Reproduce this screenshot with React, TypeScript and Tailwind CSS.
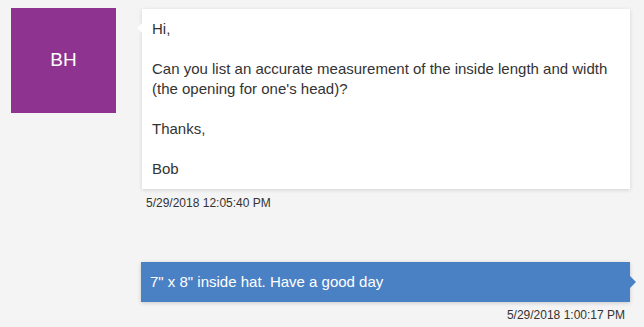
export default function App() {
  return (
    <div
      className="h-[327px] w-[644px] overflow-hidden bg-[#f4f4f4] pt-[8px] text-[#333]"
      style={{ fontFamily: '"Liberation Sans", Arial, sans-serif' }}
    >
      {/* incoming message */}
      <div className="flex items-start">
        <div className="ml-[11px] flex h-[105px] w-[105px] shrink-0 items-center justify-center bg-[#8e3390] text-[19px] text-white">
          BH
        </div>
        <div className="ml-[26px] mt-[1px] w-[488px]">
          <div className="relative bg-white px-[10px] py-[10px] text-[15px] leading-[20px] shadow-[0_1px_4px_rgba(0,0,0,0.14)]">
            <span className="absolute left-[-5px] top-[14px] h-0 w-0 border-y-[5px] border-r-[5px] border-y-transparent border-r-white" />
            <p>Hi,</p>
            <p className="mt-[20px]">
              Can you list an accurate measurement of the inside length and width (the opening for one's head)?
            </p>
            <p className="mt-[20px]">Thanks,</p>
            <p className="mt-[20px]">Bob</p>
          </div>
          <div className="mt-[6px] pl-[4px] text-[12px] leading-[16px]">5/29/2018 12:05:40 PM</div>
        </div>
      </div>

      {/* outgoing message */}
      <div className="ml-[141px] mt-[51px] w-[489px]">
        <div className="relative bg-[#4a81c4] px-[9px] py-[10px] text-[15px] leading-[20px] text-white shadow-[0_1px_4px_rgba(0,0,0,0.18)]">
          <span className="absolute right-[-6px] top-[14px] h-0 w-0 border-y-[6px] border-l-[6px] border-y-transparent border-l-[#4a81c4]" />
          7" x 8" inside hat. Have a good day
        </div>
        <div className="mt-[5px] pr-[5px] text-right text-[12px] leading-[16px]">5/29/2018 1:00:17 PM</div>
      </div>
    </div>
  );
}
